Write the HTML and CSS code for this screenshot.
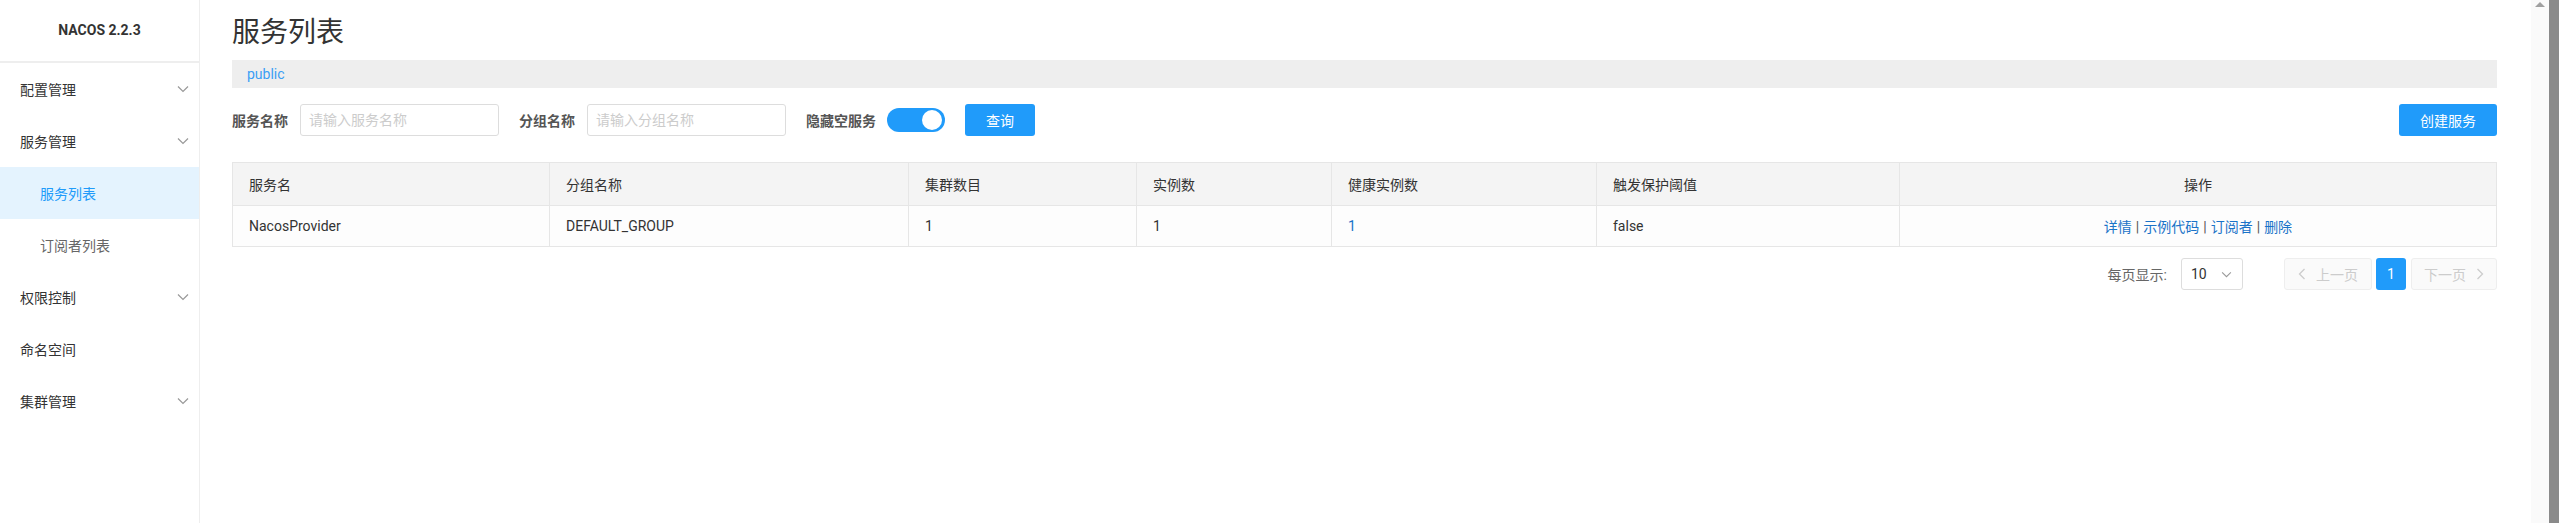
FILE: index.html
```html
<!DOCTYPE html>
<html lang="zh-CN">
<head>
<meta charset="utf-8">
<title>Nacos - 服务列表</title>
<link rel="stylesheet" href="styles.css">
</head>
<body>
<div class="app">
  <aside class="sidebar">
    <div class="brand">NACOS 2.2.3</div>
    <ul class="menu">
      <li class="menu-item"><span>配置管理</span><svg class="chev" viewBox="0 0 12 8"><path d="M1 1.5l5 5 5-5"/></svg></li>
      <li class="menu-item"><span>服务管理</span><svg class="chev" viewBox="0 0 12 8"><path d="M1 1.5l5 5 5-5"/></svg></li>
      <li class="menu-item sub active"><span>服务列表</span></li>
      <li class="menu-item sub"><span>订阅者列表</span></li>
      <li class="menu-item"><span>权限控制</span><svg class="chev" viewBox="0 0 12 8"><path d="M1 1.5l5 5 5-5"/></svg></li>
      <li class="menu-item"><span>命名空间</span></li>
      <li class="menu-item"><span>集群管理</span><svg class="chev" viewBox="0 0 12 8"><path d="M1 1.5l5 5 5-5"/></svg></li>
    </ul>
  </aside>

  <main class="main">
    <h1 class="title">服务列表</h1>
    <div class="crumb"><span class="ns">public</span></div>

    <div class="filters">
      <label class="flabel">服务名称</label>
      <input class="finput" type="text" placeholder="请输入服务名称">
      <label class="flabel gap">分组名称</label>
      <input class="finput" type="text" placeholder="请输入分组名称">
      <label class="flabel gap">隐藏空服务</label>
      <span class="switch"><span class="knob"></span></span>
      <button class="btn btn-query">查询</button>
      <span class="spacer"></span>
      <button class="btn btn-create">创建服务</button>
    </div>

    <table class="grid">
      <colgroup>
        <col class="c1"><col class="c2"><col class="c3"><col class="c4"><col class="c5"><col class="c6"><col class="c7">
      </colgroup>
      <thead>
        <tr>
          <th>服务名</th>
          <th>分组名称</th>
          <th>集群数目</th>
          <th>实例数</th>
          <th>健康实例数</th>
          <th>触发保护阈值</th>
          <th class="center">操作</th>
        </tr>
      </thead>
      <tbody>
        <tr>
          <td>NacosProvider</td>
          <td>DEFAULT_GROUP</td>
          <td>1</td>
          <td>1</td>
          <td class="blue">1</td>
          <td>false</td>
          <td class="center ops"><a>详情</a><span class="sep">|</span><a>示例代码</a><span class="sep">|</span><a>订阅者</a><span class="sep">|</span><a>删除</a></td>
        </tr>
      </tbody>
    </table>

    <div class="pager">
      <span class="psize">每页显示:</span>
      <span class="select">10<svg class="schev" viewBox="0 0 12 8"><path d="M1 1.5l5 5 5-5"/></svg></span>
      <span class="pbtn prev"><svg class="pchev" viewBox="0 0 8 12"><path d="M6.5 1l-5 5 5 5"/></svg>上一页</span>
      <span class="pnum">1</span>
      <span class="pbtn next">下一页<svg class="pchev" viewBox="0 0 8 12"><path d="M1.5 1l5 5-5 5"/></svg></span>
    </div>
  </main>

  <div class="rail">
    <div class="track"><span class="arrow"></span></div>
    <div class="thumb"></div>
  </div>
</div>
</body>
</html>
```

FILE: styles.css
```css
* { box-sizing: border-box; }
html, body { margin: 0; padding: 0; height: 100%; }
body {
  font-family: Roboto, "Noto Sans CJK SC", sans-serif;
  font-size: 14px;
  color: #333;
  background: #fff;
}
.app {
  display: flex;
  height: 523px;
  width: 2559px;
  overflow: hidden;
}

/* sidebar */
.sidebar {
  width: 200px;
  flex: 0 0 200px;
  border-right: 1px solid #eee;
  background: #fff;
}
.brand {
  height: 63px;
  border-bottom: 2px solid #eee;
  display: flex;
  align-items: center;
  justify-content: center;
  font-weight: 700;
  font-size: 14px;
  color: #333;
  padding-bottom: 2px;
}
.menu { list-style: none; margin: 0; padding: 0; }
.menu-item {
  height: 52px;
  display: flex;
  align-items: center;
  justify-content: space-between;
  padding: 0 10px 0 20px;
  color: #333;
  font-size: 14px;
}
.menu-item.sub { padding-left: 40px; }
.menu-item.active { background: #e4f3fe; color: #209bfa; }
.menu-item.sub:not(.active) { color: #666; }
.chev { width: 12px; height: 8px; fill: none; stroke: #999; stroke-width: 1.2; }

/* main */
.main {
  flex: 1 1 auto;
  padding: 0 34px 0 32px;
  min-width: 0;
}
.title {
  margin: 15px 0 9px;
  font-size: 28px;
  line-height: 36px;
  font-weight: 400;
  color: #333;
}
.crumb {
  height: 28px;
  background: #eee;
  padding-left: 15px;
  display: flex;
  align-items: center;
}
.ns { color: #3a9ef5; font-size: 14px; }

.filters {
  display: flex;
  align-items: center;
  margin-top: 16px;
  height: 32px;
}
.flabel {
  font-weight: 600;
  color: #555;
  margin-right: 12px;
}
.flabel.gap { margin-left: 20px; }
.finput {
  width: 199px;
  height: 32px;
  border: 1px solid #ddd;
  border-radius: 3px;
  padding: 0 8px;
  font-family: inherit;
  font-size: 14px;
  color: #333;
  outline: none;
}
.finput::placeholder { color: #ccc; }
.switch {
  width: 58px;
  height: 24px;
  border-radius: 12px;
  background: #209bfa;
  display: flex;
  align-items: center;
  justify-content: flex-end;
  padding: 2px 3px;
  margin-left: -1px;
}
.knob {
  width: 20px;
  height: 20px;
  border-radius: 50%;
  background: #fff;
}
.btn {
  height: 32px;
  border: 0;
  border-radius: 3px;
  background: #209bfa;
  color: #fff;
  font-family: inherit;
  font-size: 14px;
  padding: 0;
}
.btn-query { width: 70px; margin-left: 20px; }
.spacer { flex: 1; }
.btn-create { width: 98px; }

/* table */
.grid {
  width: 100%;
  margin-top: 26px;
  border-collapse: collapse;
  table-layout: fixed;
  border: 1px solid #e6e6e6;
}
.c1 { width: 317px; }
.c2 { width: 359px; }
.c3 { width: 228px; }
.c4 { width: 195px; }
.c5 { width: 265px; }
.c6 { width: 303px; }
.grid th, .grid td {
  border: 1px solid #e6e6e6;
  text-align: left;
  padding: 0 16px;
  font-size: 14px;
  font-weight: 400;
  color: #333;
}
.grid th { height: 43px; background: #f4f4f4; }
.grid td { height: 41px; background: #fdfdfd; }
.grid .center { text-align: center; }
.grid .blue { color: #1a73c8; }
.ops a { color: #1a73c8; }
.ops .sep { color: #555; margin: 0 4px; }

/* pager */
.pager {
  display: flex;
  justify-content: flex-end;
  align-items: center;
  margin-top: 11px;
  height: 32px;
}
.psize { color: #666; margin-right: 14px; }
.select {
  width: 62px;
  height: 32px;
  border: 1px solid #ddd;
  border-radius: 3px;
  display: flex;
  align-items: center;
  justify-content: space-between;
  padding: 0 10px 0 9px;
  color: #333;
  margin-right: 41px;
}
.schev { width: 11px; height: 7px; fill: none; stroke: #999; stroke-width: 1.2; }
.pbtn {
  height: 32px;
  border: 1px solid #eee;
  border-radius: 3px;
  background: #fafafa;
  color: #ccc;
  display: flex;
  align-items: center;
  justify-content: center;
  gap: 10px;
}
.prev { width: 88px; }
.next { width: 86px; }
.pchev { width: 8px; height: 12px; fill: none; stroke: #ccc; stroke-width: 1.3; }
.pnum {
  width: 30px;
  height: 32px;
  margin: 0 5px 0 4px;
  border-radius: 3px;
  background: #209bfa;
  color: #fff;
  display: flex;
  align-items: center;
  justify-content: center;
}

/* scroll rail */
.rail { display: flex; flex: 0 0 28px; }
.track {
  width: 18px;
  background: #fafafa;
  display: flex;
  justify-content: center;
  padding-top: 2px;
}
.arrow {
  width: 0;
  height: 0;
  border-left: 5px solid transparent;
  border-right: 5px solid transparent;
  border-bottom: 5px solid #a0a0a0;
}
.thumb { width: 10px; background: #8a8a8a; }
```
